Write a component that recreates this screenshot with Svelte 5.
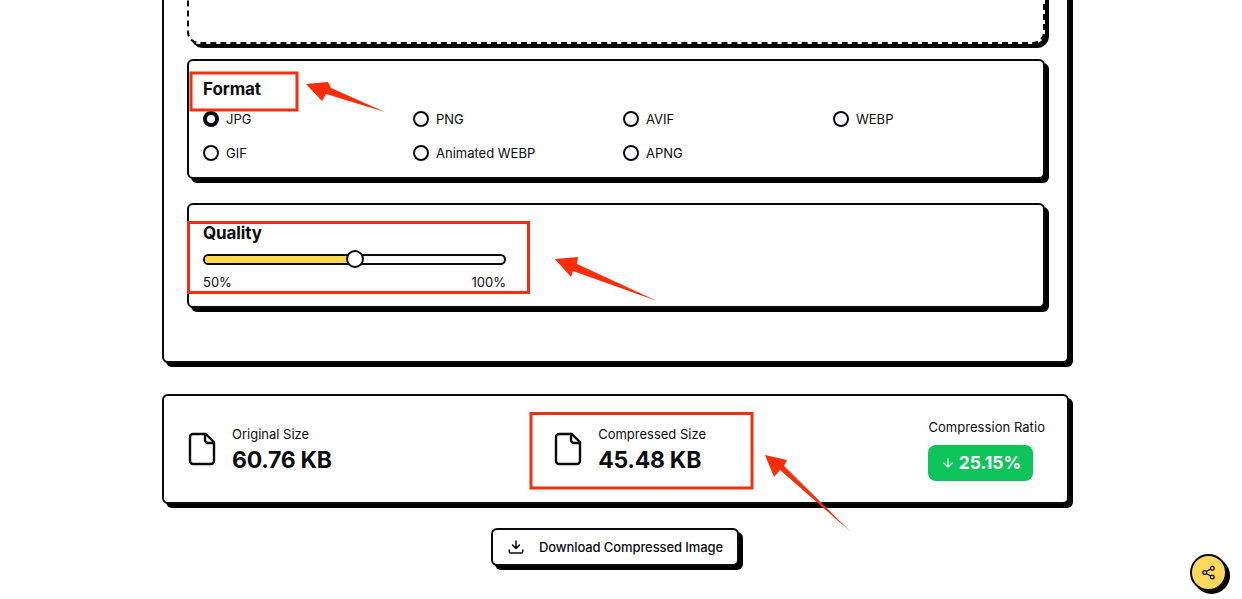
<script>
  const formats = ['JPG', 'PNG', 'AVIF', 'WEBP', 'GIF', 'Animated WEBP', 'APNG'];
  const boxes = [
    { x: 191, y: 73, w: 106, h: 37 },
    { x: 188.5, y: 222.5, w: 340, h: 70 },
    { x: 531, y: 413.5, w: 221, h: 74.5 }
  ];
  const arrows = [
    '306,84 328,82 331,88 385,112 326,94 322,101',
    '555,259 578,257 577,264 657,301 573,271 571,277',
    '765,455 787,460 784,466 851,532 780,470 774,477'
  ];
</script>

{#snippet fileIcon()}
  <svg class="file" viewBox="0 0 24 24" fill="none" stroke="currentColor" stroke-width="1.6" stroke-linecap="round" stroke-linejoin="round">
    <path d="M14.5 2H6a2 2 0 0 0-2 2v16a2 2 0 0 0 2 2h12a2 2 0 0 0 2-2V7.5Z" />
    <path d="M14 2v4a2 2 0 0 0 2 2h4" />
  </svg>
{/snippet}

<div class="page">
  <section class="card main">
    <div class="dropzone"></div>

    <div class="panel format">
      <h3>Format</h3>
      <div class="radios">
        {#each formats as f, i}
          <label class="radio">
            <span class="dot" class:on={i === 0}></span>
            {f}
          </label>
        {/each}
      </div>
    </div>

    <div class="panel quality">
      <h3>Quality</h3>
      <div class="track">
        <div class="fill"></div>
        <div class="thumb"></div>
      </div>
      <div class="ends"><span>50%</span><span>100%</span></div>
    </div>
  </section>

  <section class="card stats">
    <div class="stat">
      {@render fileIcon()}
      <div class="texts">
        <div class="label">Original Size</div>
        <div class="value">60.76 KB</div>
      </div>
    </div>
    <div class="stat">
      {@render fileIcon()}
      <div class="texts">
        <div class="label">Compressed Size</div>
        <div class="value">45.48 KB</div>
      </div>
    </div>
    <div class="ratio">
      <div class="label">Compression Ratio</div>
      <div class="pill">
        <svg viewBox="0 0 24 24" fill="none" stroke="currentColor" stroke-width="2" stroke-linecap="round" stroke-linejoin="round">
          <path d="M12 5v14M19 12l-7 7-7-7" />
        </svg>
        25.15%
      </div>
    </div>
  </section>

  <button class="download">
    <svg viewBox="0 0 24 24" fill="none" stroke="currentColor" stroke-width="2" stroke-linecap="round" stroke-linejoin="round">
      <path d="M12 4v10M7.5 9.5l4.5 4.5 4.5-4.5M3 16v2a2 2 0 0 0 2 2h14a2 2 0 0 0 2-2v-2" />
    </svg>
    Download Compressed Image
  </button>

  <button class="share" aria-label="Share">
    <svg viewBox="0 0 24 24" fill="none" stroke="currentColor" stroke-width="2" stroke-linecap="round" stroke-linejoin="round">
      <circle cx="18" cy="5" r="3" /><circle cx="6" cy="12" r="3" /><circle cx="18" cy="19" r="3" />
      <path d="M8.6 13.5l6.8 4M15.4 6.5l-6.8 4" />
    </svg>
  </button>

  <svg class="notes" viewBox="0 0 1242 599">
    {#each boxes as b}
      <rect x={b.x} y={b.y} width={b.w} height={b.h} fill="none" stroke="#f0300f" stroke-width="3" />
    {/each}
    {#each arrows as a}
      <polygon points={a} fill="#fb2c08" />
    {/each}
  </svg>
</div>

<style>
  :global(body) {
    background: #fff;
    overflow: hidden;
  }
  .page {
    position: relative;
    width: 1242px;
    height: 599px;
    overflow: hidden;
    box-sizing: border-box;
    padding-left: 162px;
    display: flex;
    flex-direction: column;
    align-items: flex-start;
    font-family: Inter, "Liberation Sans", sans-serif;
    color: #0b0b0f;
  }
  .card, .panel, .dropzone, .download {
    box-sizing: border-box;
    border: 2px solid #0b0b0f;
    border-radius: 6px;
    background: #fff;
    box-shadow: 4px 4px 0 #000;
  }
  .main {
    width: 907px;
    height: 403px;
    margin-top: -40px;
    padding: 0 22px 0 23px;
    display: flex;
    flex-direction: column;
    flex: none;
  }
  .dropzone {
    height: 82px;
    border-style: dashed;
    border-radius: 12px;
    border-top: none;
    flex: none;
  }
  .panel {
    padding: 16px 14px 0;
    flex: none;
  }
  .format {
    margin-top: 15px;
    height: 120px;
  }
  .quality {
    margin-top: 24px;
    height: 105px;
  }
  h3 {
    margin: 0;
    font-size: 17px;
    line-height: 24px;
    font-weight: 700;
    letter-spacing: -0.1px;
  }
  .radios {
    display: grid;
    grid-template-columns: repeat(4, 210px);
    row-gap: 14px;
    margin-top: 8px;
  }
  .radio {
    display: flex;
    align-items: center;
    gap: 7px;
    height: 20px;
    font-size: 13px;
  }
  .dot {
    box-sizing: border-box;
    width: 16px;
    height: 16px;
    border: 2px solid #0b0b0f;
    border-radius: 50%;
    background: #fff;
  }
  .dot.on {
    border-width: 4.5px;
  }
  .track {
    position: relative;
    box-sizing: border-box;
    width: 303px;
    height: 11px;
    margin-top: 9px;
    border: 2px solid #0b0b0f;
    border-radius: 6px;
    background: #fff;
  }
  .fill {
    width: 145px;
    height: 100%;
    background: #ffd84d;
    border-radius: 4px 0 0 4px;
  }
  .thumb {
    position: absolute;
    box-sizing: border-box;
    left: 141px;
    top: -6px;
    width: 18px;
    height: 18px;
    border: 2px solid #0b0b0f;
    border-radius: 50%;
    background: #fff;
  }
  .ends {
    width: 303px;
    display: flex;
    justify-content: space-between;
    font-size: 13px;
    line-height: 16px;
    margin-top: 9px;
  }
  .stats {
    width: 907px;
    height: 110px;
    margin-top: 31px;
    padding: 0 22px 0 20px;
    display: flex;
    align-items: center;
    justify-content: space-between;
    flex: none;
  }
  .stat {
    display: flex;
    align-items: center;
    gap: 12px;
  }
  .stat + .stat {
    margin-right: 4px;
  }
  .texts {
    margin-top: 2px;
  }
  .file {
    width: 36px;
    height: 36px;
  }
  .label {
    font-size: 13px;
    line-height: 18px;
  }
  .value {
    font-size: 23px;
    line-height: 30px;
    font-weight: 700;
    margin-top: 2px;
    letter-spacing: -0.28px;
  }
  .ratio .label {
    letter-spacing: 0.05px;
  }
  .pill {
    display: flex;
    align-items: center;
    justify-content: center;
    gap: 4px;
    width: 105px;
    height: 36px;
    margin-top: 9px;
    border-radius: 8px;
    background: #0cc45a;
    color: #fff;
    font-size: 17.5px;
    font-weight: 700;
  }
  .pill svg {
    width: 14px;
    height: 14px;
  }
  .download {
    display: flex;
    align-items: center;
    gap: 14px;
    width: 248px;
    height: 38px;
    margin: 24px 0 0 329px;
    padding: 0 0 0 14px;
    font: 500 13px Inter, "Liberation Sans", sans-serif;
    letter-spacing: -0.1px;
    color: #0b0b0f;
    flex: none;
  }
  .download svg {
    width: 18px;
    height: 18px;
  }
  .share {
    position: absolute;
    left: 1190px;
    top: 554px;
    width: 37px;
    height: 37px;
    box-sizing: border-box;
    padding: 0;
    display: flex;
    align-items: center;
    justify-content: center;
    border: 2px solid #0b0b0f;
    border-radius: 50%;
    background: #fdd85d;
    color: #0b0b0f;
    box-shadow: 3px 3px 0 #000;
  }
  .share svg {
    width: 15px;
    height: 15px;
  }
  .notes {
    position: absolute;
    inset: 0;
    width: 1242px;
    height: 599px;
    pointer-events: none;
  }
</style>
